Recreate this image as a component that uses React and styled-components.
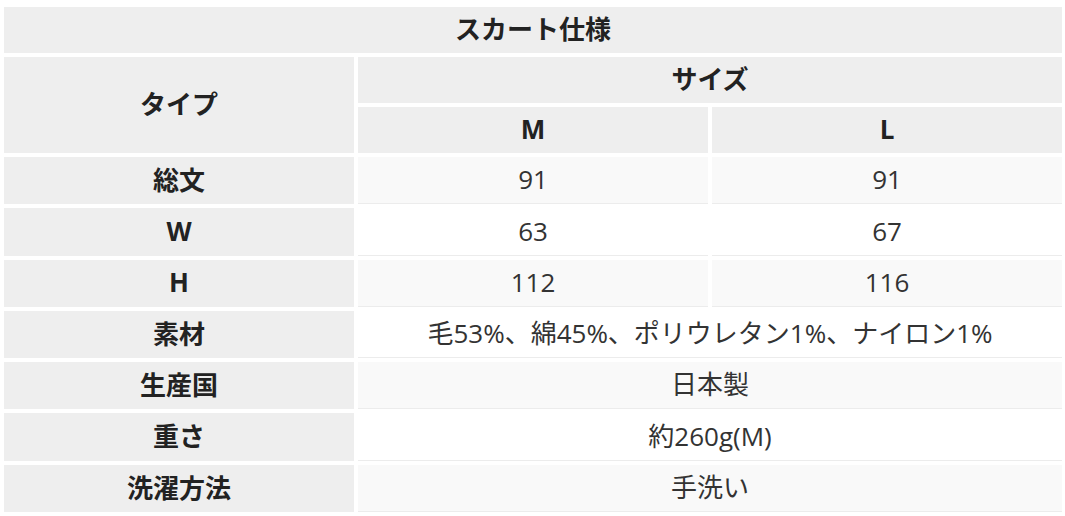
import React from "react";
import styled, { createGlobalStyle } from "styled-components";

const GlobalStyle = createGlobalStyle`
  html, body {
    margin: 0;
    padding: 0;
    background: #fff;
    overflow: hidden;
  }
  body {
    font-family: "Open Sans", "Noto Sans CJK JP", sans-serif;
    color: #333;
  }
`;

const SpecTable = styled.table`
  width: 1066px;
  margin-top: 3px;
  table-layout: fixed;
  border-collapse: separate;
  border-spacing: 4px;
  font-size: 26px;
  line-height: 1.3;
`;

const HeadRow = styled.tr`
  height: 46px;
`;

const BodyRow = styled.tr`
  height: 47.3px;
`;

const HeadCell = styled.th`
  padding: 0;
  background: #eeeeee;
  color: #222;
  font-weight: 700;
  text-align: center;
  vertical-align: middle;
`;

const DataCell = styled.td`
  padding: 0;
  background: ${(p) => (p.$stripe ? "#f9f9f9" : "#ffffff")};
  border-bottom: 1px solid #ececec;
  color: #333;
  font-weight: 400;
  text-align: center;
  vertical-align: middle;
`;

const rows = [
  { label: "総文", values: ["91", "91"] },
  { label: "W", values: ["63", "67"] },
  { label: "H", values: ["112", "116"] },
  { label: "素材", values: ["毛53%、綿45%、ポリウレタン1%、ナイロン1%"] },
  { label: "生産国", values: ["日本製"] },
  { label: "重さ", values: ["約260g(M)"] },
  { label: "洗濯方法", values: ["手洗い"] },
];

export default function App() {
  return (
    <>
      <GlobalStyle />
      <SpecTable>
        <colgroup>
          <col style={{ width: "350px" }} />
          <col style={{ width: "350px" }} />
          <col style={{ width: "350px" }} />
        </colgroup>
        <thead>
          <HeadRow>
            <HeadCell colSpan={3}>スカート仕様</HeadCell>
          </HeadRow>
          <HeadRow>
            <HeadCell rowSpan={2}>タイプ</HeadCell>
            <HeadCell colSpan={2}>サイズ</HeadCell>
          </HeadRow>
          <HeadRow>
            <HeadCell>M</HeadCell>
            <HeadCell>L</HeadCell>
          </HeadRow>
        </thead>
        <tbody>
          {rows.map((row, i) => (
            <BodyRow key={row.label}>
              <HeadCell>{row.label}</HeadCell>
              {row.values.length === 1 ? (
                <DataCell colSpan={2} $stripe={i % 2 === 0}>
                  {row.values[0]}
                </DataCell>
              ) : (
                row.values.map((v, j) => (
                  <DataCell key={j} $stripe={i % 2 === 0}>
                    {v}
                  </DataCell>
                ))
              )}
            </BodyRow>
          ))}
        </tbody>
      </SpecTable>
    </>
  );
}
